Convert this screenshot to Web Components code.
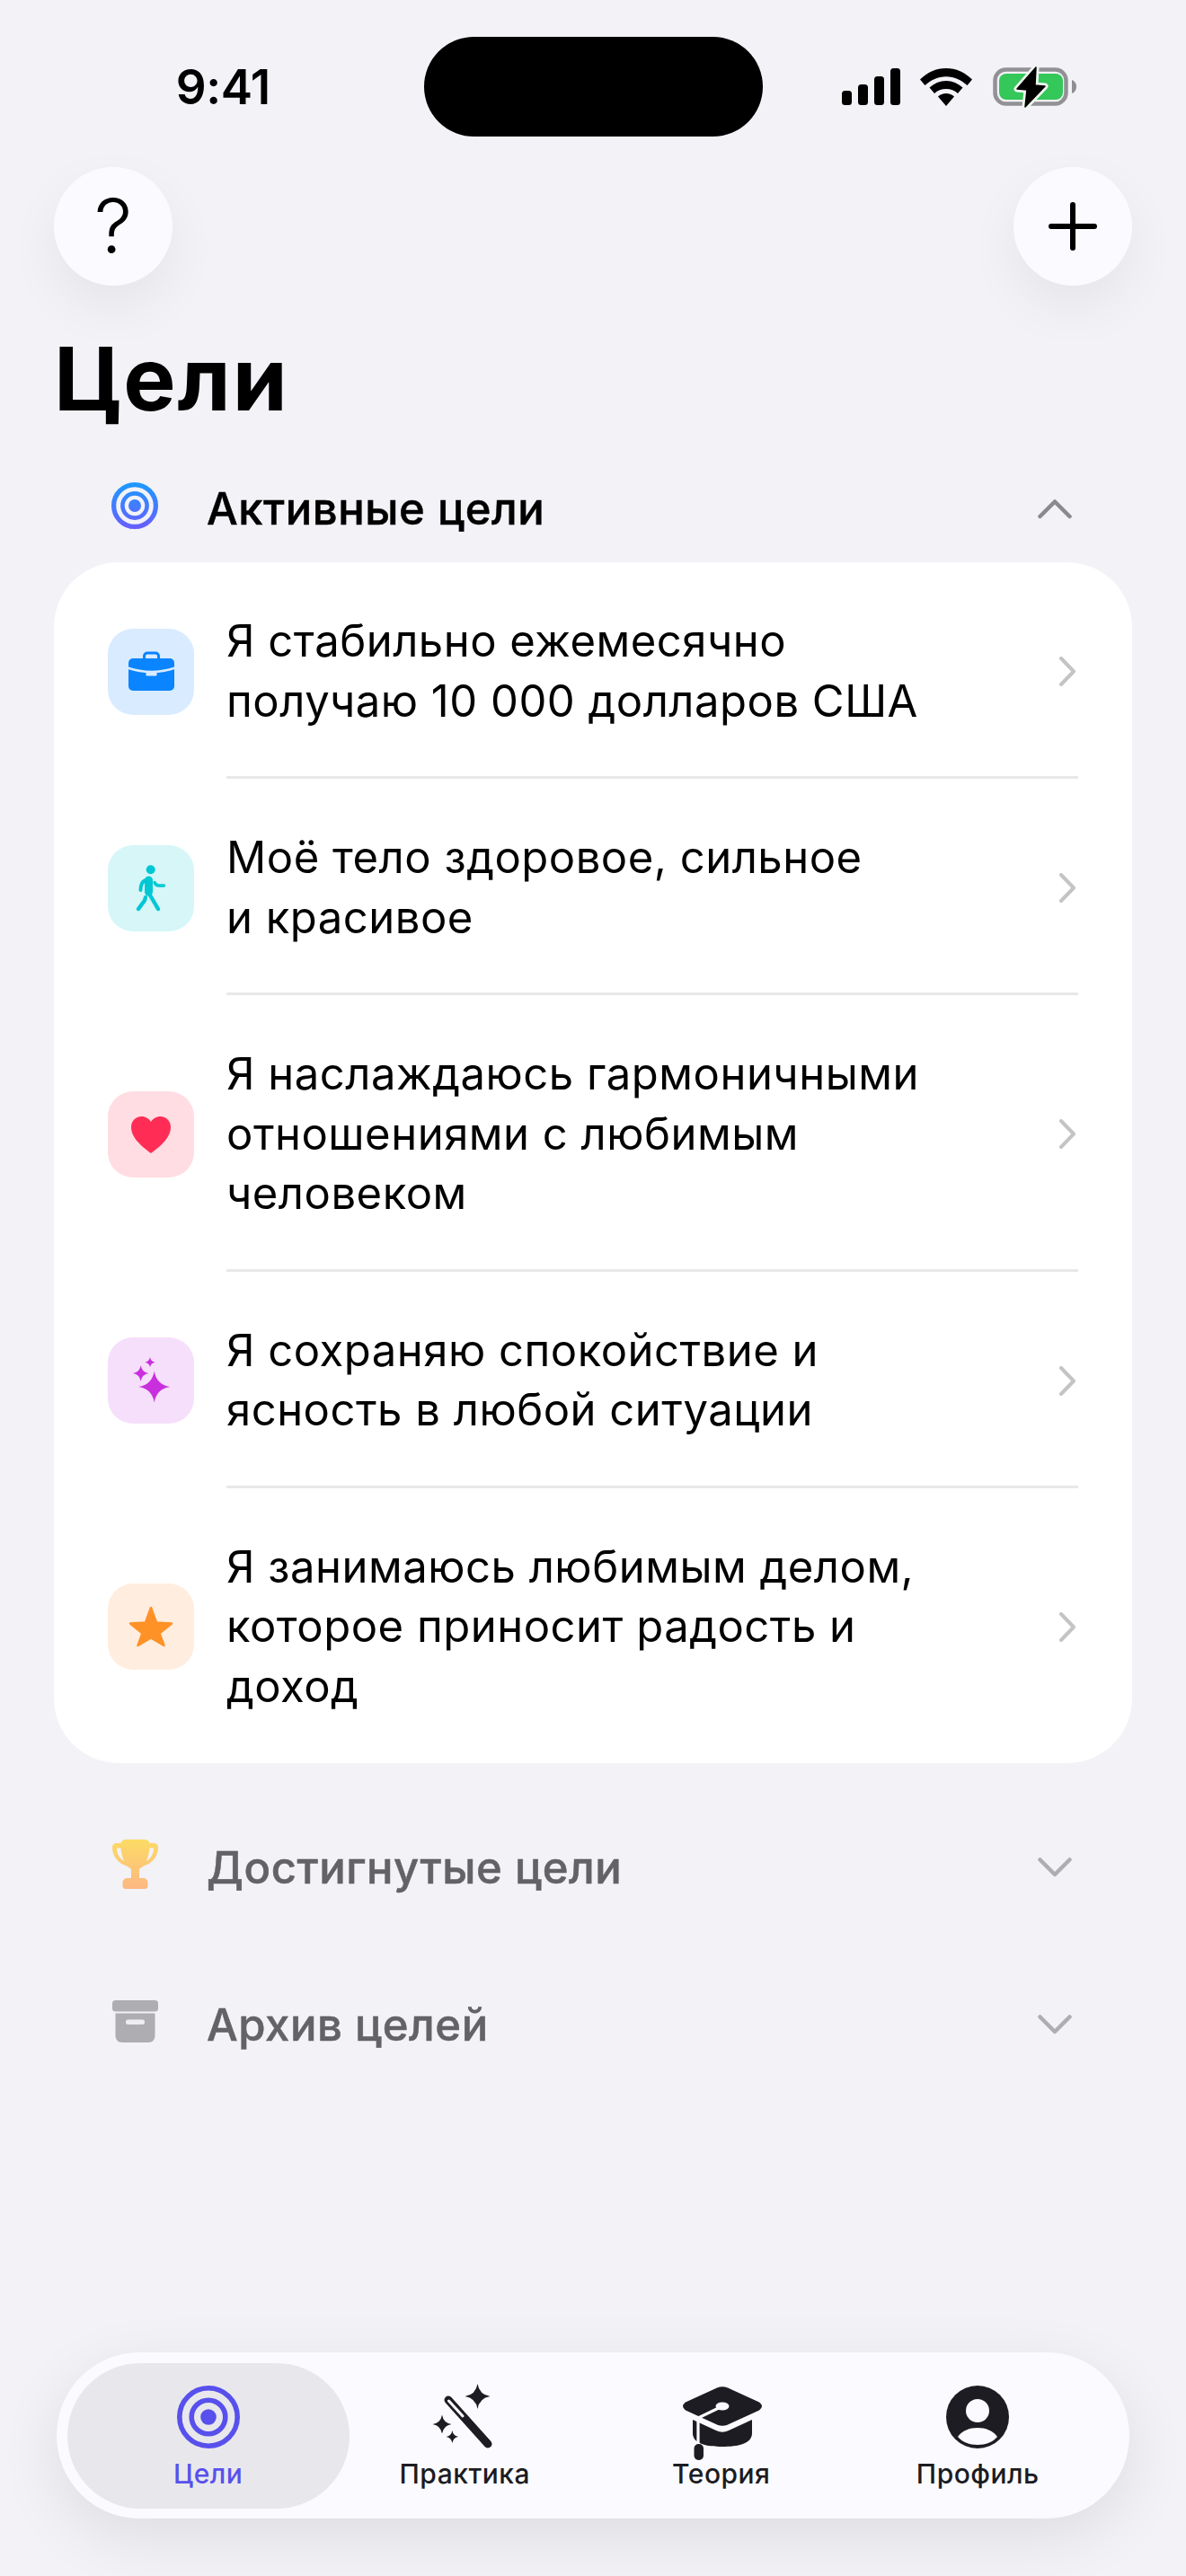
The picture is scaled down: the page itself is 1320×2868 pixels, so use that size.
<!DOCTYPE html>
<html lang="ru">
<head>
<meta charset="utf-8">
<title>Цели</title>
<style>
  html, body { margin: 0; background: #f2f2f7; }
  body { font-family: Inter, "Noto Sans", sans-serif; }
</style>
</head>
<body>
<goals-app></goals-app>

<script>
const CHEVRON = {
    up    : 'M2.5 20 L19 3.5 L35.5 20',
    down  : 'M2.5 2.5 L19 19 L35.5 2.5',
};

function star4(cx, cy, r){
    const k = r * 0.14;
    return `M${cx} ${cy-r}Q${cx+k} ${cy-k} ${cx+r} ${cy}Q${cx+k} ${cy+k} ${cx} ${cy+r}Q${cx-k} ${cy+k} ${cx-r} ${cy}Q${cx-k} ${cy-k} ${cx} ${cy-r}Z`;
}

const ICONS = {
    briefcase : `<svg viewBox="0 0 96 96" width="96" height="96">
        <rect x="40.5" y="27" width="16" height="12" rx="3.5" fill="none" stroke="#0a84ff" stroke-width="3"/>
        <rect x="23" y="33" width="51" height="36" rx="5" fill="#0a84ff"/>
        <path d="M22 43.5Q48.5 52.5 75 43.5" fill="none" stroke="#d9ebff" stroke-width="2.6"/>
        <rect x="42.5" y="47" width="12" height="5.5" rx="1.2" fill="#d9ebff"/>
    </svg>`,
    walk : `<svg viewBox="0 0 96 96" width="96" height="96">
        <g fill="none" stroke="#00c7d4" stroke-linecap="round" stroke-linejoin="round">
            <circle cx="47.7" cy="27.3" r="5" fill="#00c7d4" stroke="none"/>
            <path d="M45.5 39 L45.5 52" stroke-width="9"/>
            <path d="M42 39 Q36.5 41 36.5 50" stroke-width="4"/>
            <path d="M52 41.5 Q53.5 45 57 45 L62.5 45" stroke-width="3.4"/>
            <path d="M46 54 L56 71" stroke-width="4.4"/>
            <path d="M42 58 L41 61.5 L34 71" stroke-width="4.4"/>
        </g>
    </svg>`,
    heart : `<svg viewBox="0 0 96 96" width="96" height="96">
        <path d="M48 69 C45 66.5 26 54.5 26 40 C26 33 31 28 37.5 28 C42 28 45.8 30.5 48 34 C50.2 30.5 54 28 58.5 28 C65 28 70 33 70 40 C70 54.5 51 66.5 48 69Z" fill="#ff2d55"/>
    </svg>`,
    sparkles : `<svg viewBox="0 0 96 96" width="96" height="96" fill="#c92fdd">
        <path d="${star4(51.7,55,17.5)}"/>
        <path d="${star4(36.7,40,8.7)}"/>
        <path d="${star4(47,27.7,5.6)}"/>
    </svg>`,
    star : `<svg viewBox="0 0 96 96" width="96" height="96">
        <path d="M48 27 L54 43.5 L71 44.5 L57.5 55.5 L62.5 69 L48 60.5 L33.5 69 L38.5 55.5 L25 44.5 L42 43.5Z" fill="#ff9227" stroke="#ff9227" stroke-width="2.6" stroke-linejoin="round"/>
    </svg>`,
    target : `<svg viewBox="0 0 52 52" width="52" height="52">
        <defs><linearGradient id="tg" gradientUnits="userSpaceOnUse" x1="0" y1="0" x2="0" y2="52"><stop offset="0" stop-color="#1a9bff"/><stop offset="1" stop-color="#6a5cff"/></linearGradient></defs>
        <g fill="none" stroke="url(#tg)">
            <circle cx="26" cy="26" r="23.4" stroke-width="5.2"/>
            <circle cx="26" cy="26" r="13.6" stroke-width="4.6"/>
        </g>
        <circle cx="26" cy="26" r="7" fill="url(#tg)"/>
    </svg>`,
    trophy : `<svg viewBox="0 0 51 55" width="51" height="55">
        <defs><linearGradient id="tr" gradientUnits="userSpaceOnUse" x1="0" y1="0" x2="0" y2="55"><stop offset="0" stop-color="#fcdb65"/><stop offset="1" stop-color="#fdb783"/></linearGradient></defs>
        <path fill="url(#tr)" fill-rule="evenodd" d="M15 0 H36 C39 0 41 2 41.5 4 H46 C49 4 51 6 51 9 C51 18 45 26 36 29 C33.5 30.5 31.5 31.5 30 33 V43 H34 C37 43 39.5 45 39.5 48 V52 C39.5 54 38 55 36 55 H15 C13 55 11.5 54 11.5 52 V48 C11.5 45 14 43 17 43 H21 V33 C19.5 31.5 17.5 30.5 15 29 C6 26 0 18 0 9 C0 6 2 4 5 4 H9.5 C10 2 12 0 15 0Z M5 9.5 C5 16 8 21 13 24 C11 19 9.8 14 9.5 9.5Z M46 9.5 H41.5 C41.2 14 40 19 38 24 C43 21 46 16 46 9.5Z"/>
    </svg>`,
    archive : `<svg viewBox="0 0 51 47" width="51" height="47">
        <rect x="0" y="0" width="51" height="12.5" rx="3.5" fill="#aeaeb2"/>
        <path d="M3.5 14.5 H47.5 V39 C47.5 43.5 45 47 40 47 H11 C6 47 3.5 43.5 3.5 39Z" fill="#aeaeb2"/>
        <rect x="15" y="21.5" width="21" height="5.5" rx="2.5" fill="#eeeef2"/>
    </svg>`,
    tabTarget : `<svg viewBox="0 0 70 70" width="70" height="70">
        <g fill="none" stroke="#5850ec" stroke-width="5.6">
            <circle cx="35" cy="35" r="32.2"/>
            <circle cx="35" cy="35" r="18.8"/>
        </g>
        <circle cx="35" cy="35" r="8.8" fill="#5850ec"/>
    </svg>`,
    wand : `<svg viewBox="0 0 70 70" width="70" height="70" style="overflow:visible">
        <g fill="#1c1c22">
            <path d="${star4(49.5,12,14)}"/>
            <path d="${star4(10,43,10.5)}"/>
            <path d="${star4(21.4,57,7)}"/>
        </g>
        <path d="M17 16 L61 65" stroke="#1c1c22" stroke-width="9" stroke-linecap="round"/>
        <path d="M17.5 17 L33 34" stroke="#fbfbff" stroke-width="3" stroke-linecap="round"/>
    </svg>`,
    cap : `<svg viewBox="0 0 70 70" width="70" height="70" style="overflow:visible">
        <g transform="translate(-15,-1)">
            <path d="M18 39 L44 51 Q51 54.5 58 51 L84 39 V54 C84 66 68 69 51 69 C34 69 18 66 18 54Z" fill="#1c1c22"/>
            <path d="M10 19.5 L45 3.5 Q51 1 57 3.5 L92 19.5 Q98 24 92 28.5 L57 44.5 Q51 47 45 44.5 L10 28.5 Q4 24 10 19.5Z" fill="#1c1c22"/>
            <path d="M51 24 L24 37 V66" fill="none" stroke="#fbfbff" stroke-width="3.2"/>
            <ellipse cx="51" cy="24" rx="7.5" ry="4.6" fill="#fbfbff"/>
            <rect x="19.5" y="66" width="10.5" height="18" rx="5" fill="#1c1c22"/>
        </g>
    </svg>`,
    person : `<svg viewBox="0 0 70 70" width="70" height="70">
        <circle cx="35" cy="35" r="35" fill="#1c1c22"/>
        <circle cx="35" cy="28" r="13" fill="#fbfbff"/>
        <path d="M13 57 C18 50 26 47 35 47 C44 47 52 50 57 57 C52 63 44 66 35 66 C26 66 18 63 13 57Z" fill="#fbfbff"/>
    </svg>`,
};


class StatusBar extends HTMLElement {
    constructor(){
        super();
        this.attachShadow({ mode : 'open' });
    }

    connectedCallback(){
        this.shadowRoot.innerHTML = `
            <style>
                :host { display: block; }
                .bar {
                    display: grid;
                    grid-template-columns: 1fr 377px 1fr;
                    align-items: center;
                    height: 111px;
                    padding-top: 41px;
                }
                .time {
                    padding: 2px 0 0 25px;
                    text-align: center;
                    font: 600 53px/1 Inter, sans-serif;
                    letter-spacing: -.5px;
                    color: #000;
                }
                .island { height: 111px; border-radius: 56px; background: #000; }
                .icons {
                    display: flex;
                    align-items: center;
                    justify-content: flex-end;
                    gap: 22px;
                    padding-right: 122px;
                }
                svg { display: block; }
            </style>
            <div class="bar">
                <div class="time">9:41</div>
                <div class="island"></div>
                <div class="icons">
                    <svg width="65" height="41" viewBox="0 0 65 41" fill="#000">
                        <rect x="0" y="25" width="11" height="16" rx="3.5"/>
                        <rect x="18" y="18" width="11" height="23" rx="3.5"/>
                        <rect x="36" y="9" width="11" height="32" rx="3.5"/>
                        <rect x="54" y="0" width="11" height="41" rx="3.5"/>
                    </svg>
                    <svg width="58" height="42" viewBox="0 0 58 42" fill="#000">
                        <path d="M29 0C40 0 50 4.500 58 12.500L52.500 19C46 13 38 9.200 29 9.200C20 9.200 12 13 5.500 19L0 12.500C8 4.500 18 0 29 0Z"/>
                        <path d="M29 14C36 14 42.500 17 47.500 21.500L42 28C38.500 24.800 34 23 29 23C24 23 19.500 24.800 16 28L10.500 21.500C15.500 17 22 14 29 14Z"/>
                        <path d="M29 28C32.500 28 35.700 29.300 38 31.500L29 42L20 31.500C22.300 29.300 25.500 28 29 28Z"/>
                    </svg>
                    <svg width="93" height="46" viewBox="0 0 93 46" style="margin-left:1px">
                        <rect x="2.500" y="3.500" width="79" height="38" rx="12" fill="none" stroke="#929296" stroke-width="4.500"/>
                        <rect x="7" y="8" width="71" height="29" rx="8" fill="#34c759"/>
                        <path d="M88 15 C91 16 93 19 93 22.500 C93 26 91 29 88 30Z" fill="#8e8e93"/>
                        <path d="M48 1 L27 25 L38 26 L36 45 L58 22 L47 21Z" fill="#000" stroke="#eef7f0" stroke-width="7" stroke-linejoin="round"/>
                        <path d="M48 1 L27 25 L38 26 L36 45 L58 22 L47 21Z" fill="#000" stroke="#000" stroke-width="1.500" stroke-linejoin="round"/>
                    </svg>
                </div>
            </div>
        `;
    }
}
customElements.define('status-bar', StatusBar);


class RoundButton extends HTMLElement {
    constructor(){
        super();
        this.attachShadow({ mode : 'open' });
        this.shadowRoot.innerHTML = `
            <style>
                :host {
                    display: flex;
                    align-items: center;
                    justify-content: center;
                    width: 132px;
                    height: 132px;
                    border-radius: 50%;
                    background: #fbfbff;
                    box-shadow: 0 24px 60px rgba(0, 0, 0, .06);
                    font: 300 84px/1 Inter, sans-serif;
                    color: #000;
                }
            </style>
            <slot></slot>
        `;
    }
}
customElements.define('round-button', RoundButton);


class SectionHeader extends HTMLElement {
    constructor(){
        super();
        this.attachShadow({ mode : 'open' });
    }

    connectedCallback(){
        const dir = this.getAttribute('dir-chevron') || 'down';
        const stroke = dir === 'up' ? '#8a8a8e' : '#aeaeb2';
        this.shadowRoot.innerHTML = `
            <style>
                :host { display: block; }
                .head {
                    display: flex;
                    align-items: center;
                    height: 120px;
                    padding: 0 67px 0 64px;
                    font: 500 49px/1 Inter, sans-serif;
                    letter-spacing: .55px;
                    color: var(--head-color, #000);
                }
                .icon { width: 52px; display: flex; justify-content: center; flex: none; }
                .label { flex: 1; margin-left: 54px; -webkit-text-stroke: .5px currentColor; }
                svg { display: block; }
            </style>
            <div class="head">
                <div class="icon"><slot name="icon"></slot></div>
                <div class="label"><slot></slot></div>
                <svg width="38" height="23" viewBox="0 0 38 23" fill="none" stroke="${stroke}" stroke-width="4.500" stroke-linecap="round" stroke-linejoin="round">
                    <path d="${CHEVRON[dir]}"/>
                </svg>
            </div>
        `;
    }
}
customElements.define('section-header', SectionHeader);


class GoalCard extends HTMLElement {
    constructor(){
        super();
        this.attachShadow({ mode : 'open' });
        this.shadowRoot.innerHTML = `
            <style>
                :host {
                    display: block;
                    padding-bottom: 2px;
                    border-radius: 72px;
                    background: #fff;
                }
            </style>
            <slot></slot>
        `;
    }
}
customElements.define('goal-card', GoalCard);


class GoalRow extends HTMLElement {
    constructor(){
        super();
        this.attachShadow({ mode : 'open' });
    }

    connectedCallback(){
        const tint = this.getAttribute('tint');
        const icon = this.getAttribute('icon');
        this.shadowRoot.innerHTML = `
            <style>
                :host { display: block; }
                :host(:last-child) .sep { display: none; }
                .row {
                    display: flex;
                    align-items: center;
                    padding: 55px 63px 50px 60px;
                }
                .tile {
                    flex: none;
                    width: 96px;
                    height: 96px;
                    margin-right: 36px;
                    border-radius: 28px;
                    background: ${tint};
                }
                .tile svg { display: block; }
                .text {
                    flex: 1;
                    font: 400 49px/66.5px Inter, sans-serif;
                    letter-spacing: .5px;
                    color: #000;
                }
                .chev { flex: none; display: block; }
                .sep { height: 3px; margin: 0 60px 0 192px; background: #e8e8ea; }
            </style>
            <div class="row">
                <div class="tile">${ICONS[icon]}</div>
                <div class="text"><slot></slot></div>
                <svg class="chev" width="18" height="33" viewBox="0 0 18 33" fill="none" stroke="#c4c4c6" stroke-width="4" stroke-linecap="round" stroke-linejoin="round">
                    <path d="M2 2 L16 16.500 L2 31"/>
                </svg>
            </div>
            <div class="sep"></div>
        `;
    }
}
customElements.define('goal-row', GoalRow);


class TabItem extends HTMLElement {
    constructor(){
        super();
        this.attachShadow({ mode : 'open' });
    }

    connectedCallback(){
        const active = this.hasAttribute('active');
        this.shadowRoot.innerHTML = `
            <style>
                :host {
                    position: relative;
                    display: flex;
                    flex-direction: column;
                    align-items: center;
                    width: 285.500px;
                    padding-top: 37px;
                    font: 500 30px/36px Inter, sans-serif;
                    letter-spacing: .5px;
                    color: ${active ? '#5850ec' : '#1c1c22'};
                }
                :host([active])::before {
                    content: '';
                    position: absolute;
                    top: 12px;
                    bottom: 11px;
                    left: -14px;
                    right: -14px;
                    border-radius: 81px;
                    background: #e8e8ec;
                }
                .icon { position: relative; height: 70px; }
                .icon svg { display: block; }
                .label { position: relative; margin-top: 10px; }
            </style>
            <div class="icon">${ICONS[this.getAttribute('icon')]}</div>
            <div class="label"><slot></slot></div>
        `;
    }
}
customElements.define('tab-item', TabItem);


class TabBar extends HTMLElement {
    constructor(){
        super();
        this.attachShadow({ mode : 'open' });
        this.shadowRoot.innerHTML = `
            <style>
                :host {
                    display: flex;
                    height: 185px;
                    padding: 0 26px;
                    border-radius: 93px;
                    background: #fbfbff;
                    box-shadow: 0 20px 70px rgba(0, 0, 0, .09);
                }
            </style>
            <slot></slot>
        `;
    }
}
customElements.define('tab-bar', TabBar);


class GoalsApp extends HTMLElement {
    constructor(){
        super();
        this.attachShadow({ mode : 'open' });
    }

    connectedCallback(){
        this.shadowRoot.innerHTML = `
            <style>
                :host {
                    display: flex;
                    flex-direction: column;
                    height: 2868px;
                    overflow: hidden;
                    background: #f2f2f7;
                }
                .content { display: flex; flex-direction: column; flex: 1; padding: 0 60px; }
                .actions { display: flex; justify-content: space-between; margin-top: 34px; }
                .plus { display: block; }
                h1 {
                    margin: 0;
                    padding-top: 45px;
                    height: 143px;
                    font: 700 98px/118px Inter, sans-serif;
                    letter-spacing: 2px;
                    color: #000;
                }
                .achieved { margin-top: 56px; --head-color: #636366; }
                .archive { margin-top: 55px; --head-color: #636366; }
                tab-bar { margin: auto 3px 64px; }
            </style>
            <status-bar></status-bar>
            <div class="content">
                <div class="actions">
                    <round-button>?</round-button>
                    <round-button>
                        <svg class="plus" width="54" height="54" viewBox="0 0 54 54" fill="none" stroke="#000" stroke-width="6" stroke-linecap="round">
                            <path d="M27 3 V51 M3 27 H51"/>
                        </svg>
                    </round-button>
                </div>
                <h1>Цели</h1>

                <section-header dir-chevron="up">
                    <span slot="icon">${ICONS.target}</span>
                    Активные цели
                </section-header>
                <goal-card>
                    <goal-row icon="briefcase" tint="#d9ebff">Я стабильно ежемесячно<br>получаю 10 000 долларов США</goal-row>
                    <goal-row icon="walk" tint="#d6f6f8">Моё тело здоровое, сильное<br>и красивое</goal-row>
                    <goal-row icon="heart" tint="#ffdde3">Я наслаждаюсь гармоничными<br>отношениями с любимым<br>человеком</goal-row>
                    <goal-row icon="sparkles" tint="#f5dffa">Я сохраняю спокойствие и<br>ясность в любой ситуации</goal-row>
                    <goal-row icon="star" tint="#ffeee0">Я занимаюсь любимым делом,<br>которое приносит радость и<br>доход</goal-row>
                </goal-card>

                <section-header class="achieved">
                    <span slot="icon">${ICONS.trophy}</span>
                    Достигнутые цели
                </section-header>
                <section-header class="archive">
                    <span slot="icon">${ICONS.archive}</span>
                    Архив целей
                </section-header>

                <tab-bar>
                    <tab-item icon="tabTarget" active>Цели</tab-item>
                    <tab-item icon="wand">Практика</tab-item>
                    <tab-item icon="cap">Теория</tab-item>
                    <tab-item icon="person">Профиль</tab-item>
                </tab-bar>
            </div>
        `;
    }
}
customElements.define('goals-app', GoalsApp);
</script>
</body>
</html>
